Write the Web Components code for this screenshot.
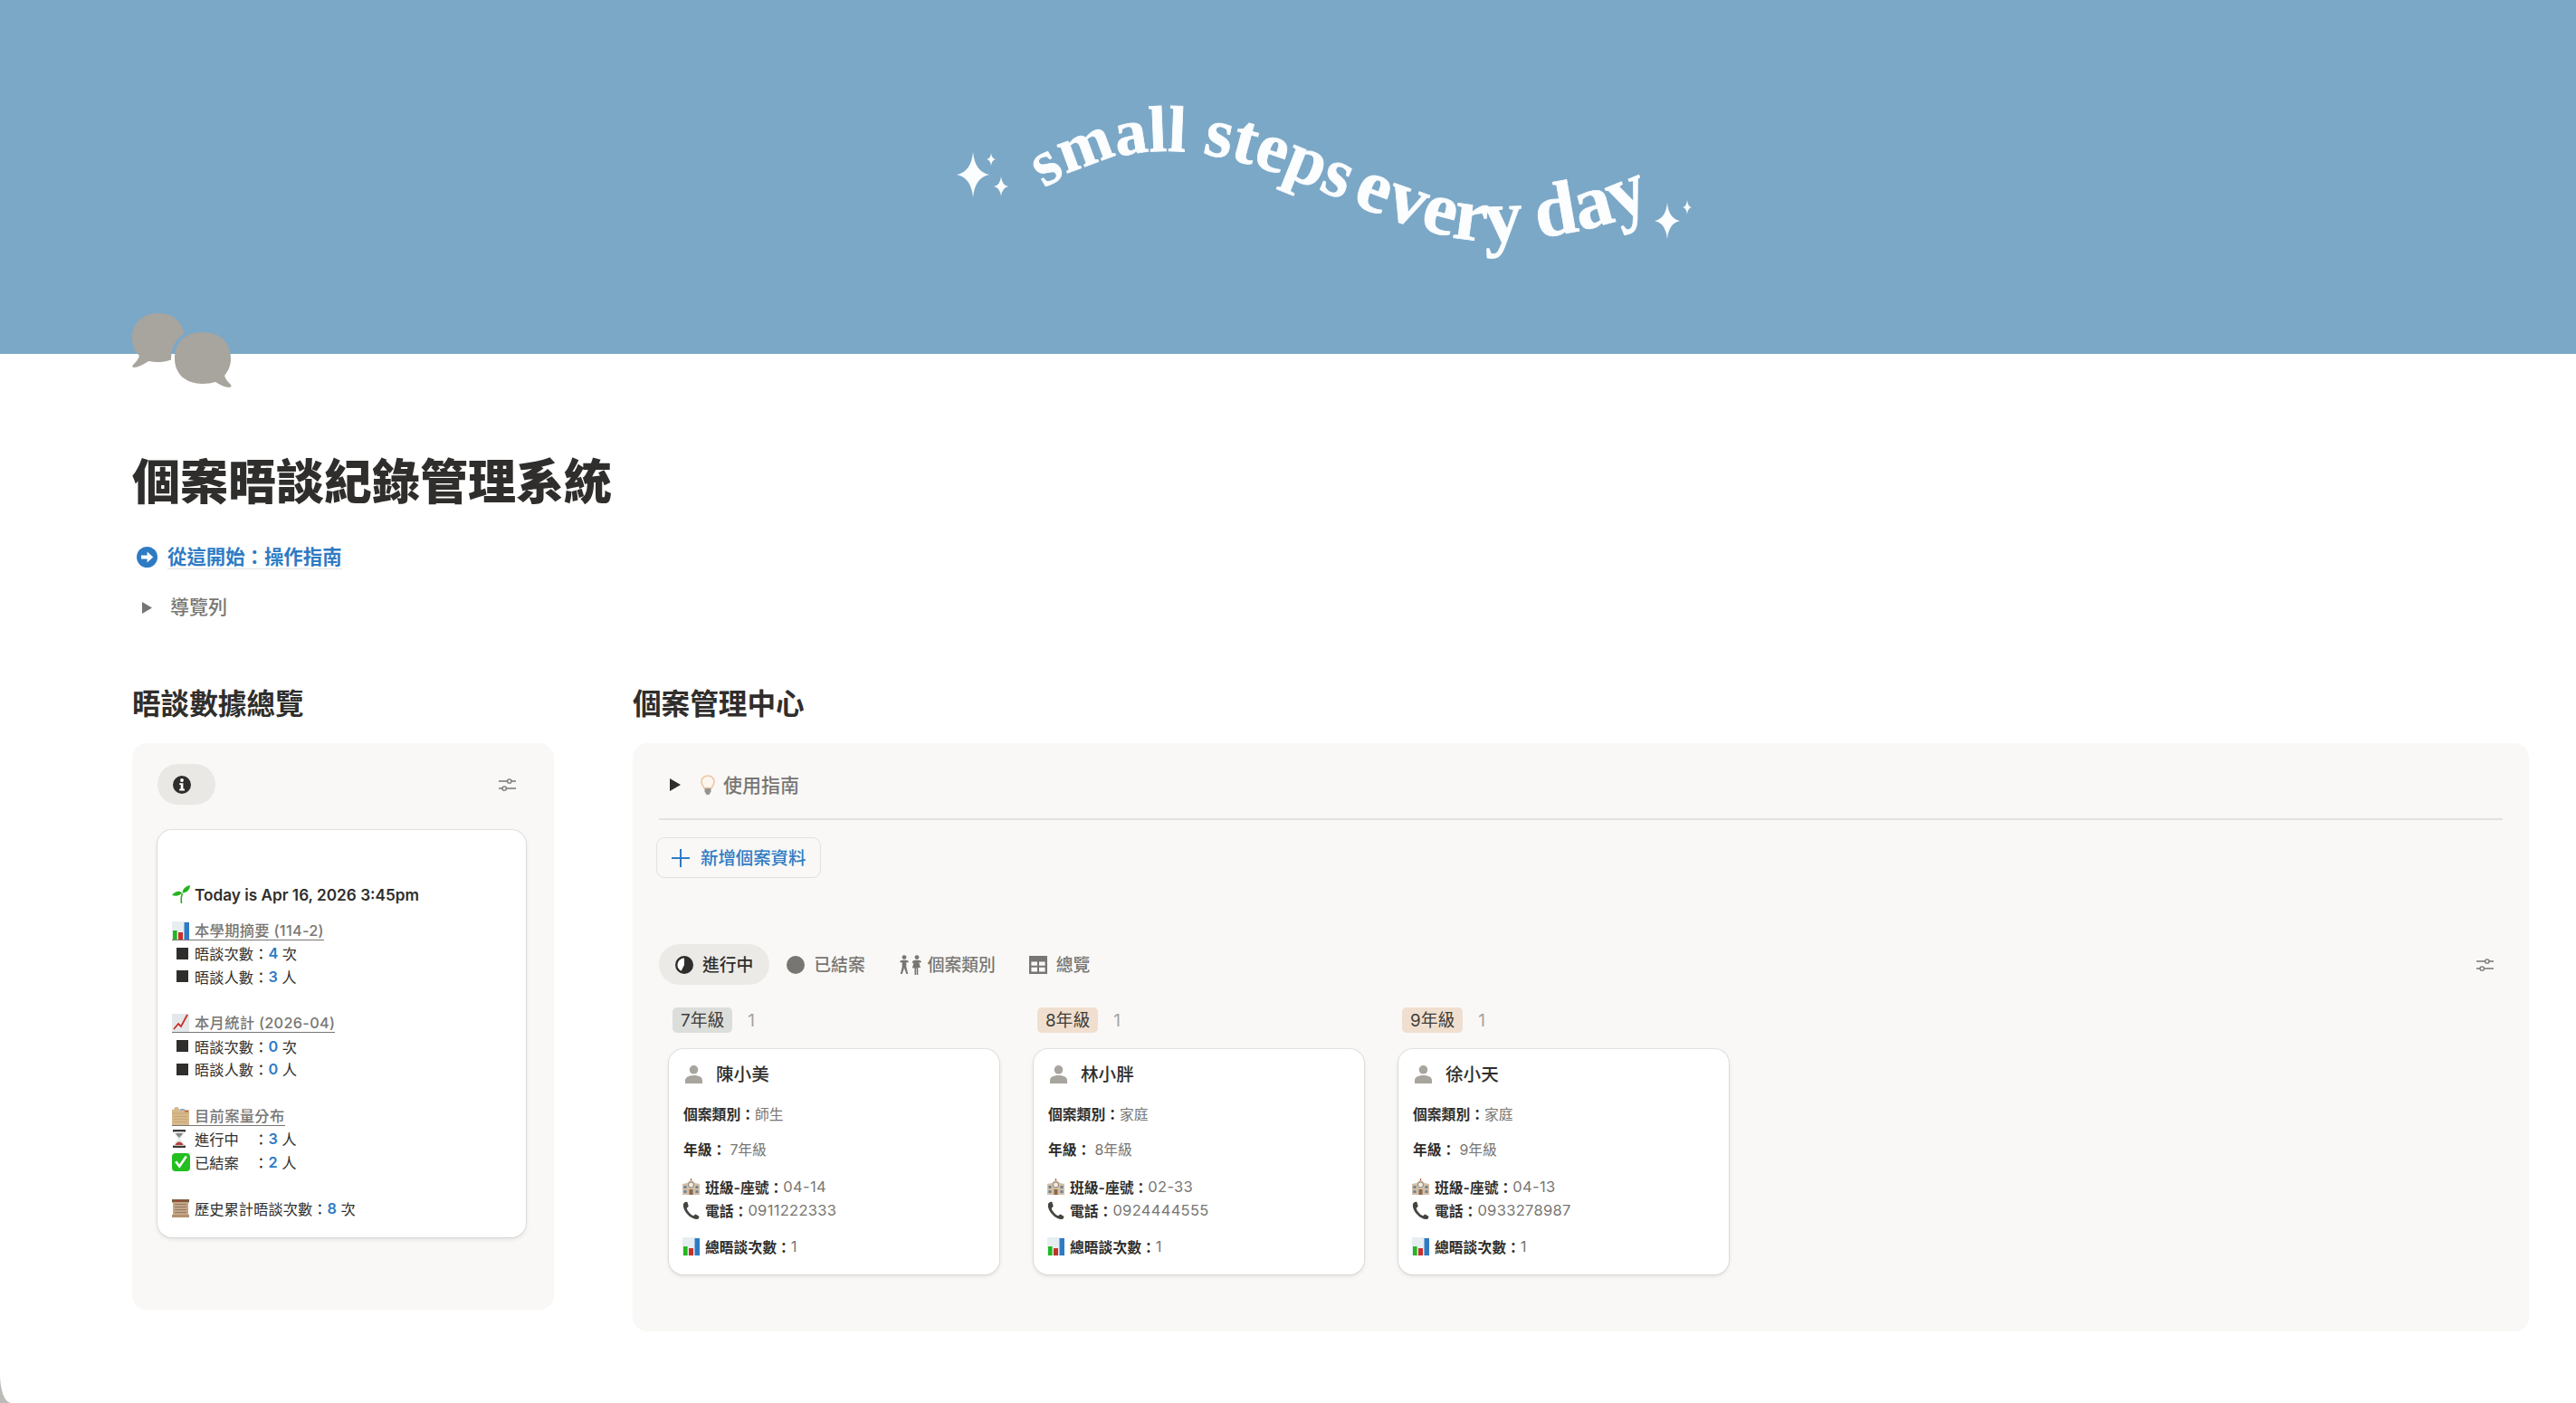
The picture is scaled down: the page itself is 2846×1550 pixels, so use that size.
<!DOCTYPE html>
<html lang="zh-Hant">
<head>
<meta charset="utf-8">
<title>個案晤談紀錄管理系統</title>
<style>
html,body{margin:0;padding:0;background:#bdbbb7;}
body{font-family:Inter,"Noto Sans CJK TC",sans-serif;color:#2f2e2c;overflow:hidden;}
</style>
</head>
<body>
<x-app>
  <x-cover></x-cover>
  <x-page-head title-text="個案晤談紀錄管理系統" link-text="從這開始：操作指南" toggle-text="導覽列"></x-page-head>
  <x-columns>
    <x-section slot="left" heading="晤談數據總覽">
      <x-stats-panel></x-stats-panel>
    </x-section>
    <x-section slot="right" heading="個案管理中心">
      <x-manage-panel>
        <x-tab active icon="pie">進行中</x-tab>
        <x-tab icon="dot">已結案</x-tab>
        <x-tab icon="people">個案類別</x-tab>
        <x-tab icon="table">總覽</x-tab>
        <x-board-col slot="board" label="7年級" tone="#dcdedb">
          <x-case-card name="陳小美" kind="師生" grade="7年級" seat="04-14" phone="0911222333" total="1"></x-case-card>
        </x-board-col>
        <x-board-col slot="board" label="8年級" tone="#f0dfcf">
          <x-case-card name="林小胖" kind="家庭" grade="8年級" seat="02-33" phone="0924444555" total="1"></x-case-card>
        </x-board-col>
        <x-board-col slot="board" label="9年級" tone="#f0dfcf">
          <x-case-card name="徐小天" kind="家庭" grade="9年級" seat="04-13" phone="0933278987" total="1"></x-case-card>
        </x-board-col>
      </x-manage-panel>
    </x-section>
  </x-columns>
</x-app>
<script>
const ICONS = {
  arrow:[23,23,'<circle cx="11.5" cy="11.5" r="11.5" fill="#2e7bc4"/><path d="M5 9.4h6.6V5.6l6.6 5.9-6.6 5.9v-3.8H5z" fill="#fff"/>'],
  tri:[12,14,'<path d="M0 0l12 7-12 7z" fill="currentColor"/>'],
  info:[20,20,'<circle cx="10" cy="10" r="10" fill="#2f2e2c"/><circle cx="10" cy="5" r="1.9" fill="#fff"/><path d="M7.2 8.2h4.2v6.4h1.6v1.8H7.2v-1.8h1.5v-4.6H7.2z" fill="#fff"/>'],
  sliders:[19,16,'<g fill="none" stroke="#787672" stroke-width="1.3"><path d="M0 4h9.5M14 4h5M0 12h4M8.5 12H19"/><circle cx="11.8" cy="4" r="2.2"/><circle cx="6.2" cy="12" r="2.2"/></g>'],
  plus:[20,20,'<path d="M10 0v20M0 10h20" stroke="#2e7bc4" stroke-width="2" fill="none"/>'],
  pie:[20,20,'<circle cx="10" cy="10" r="8.8" fill="#fff" stroke="#2f2e2c" stroke-width="2.400"/><path d="M10 10V1a9 9 0 0 1 0 18 9 9 0 0 1-4-1z" fill="#2f2e2c"/>'],
  dot:[20,20,'<circle cx="10" cy="10" r="10" fill="#787672"/>'],
  people:[26,22,'<g fill="#787672"><circle cx="6" cy="2.6" r="2.4"/><path d="M1 7.2C2 6 3.6 5.8 6 5.8s4 .2 5 1.4l-1.1 1.4-1.6-.7v5l1.9 8h-1.9L6 14.6 3.7 21H1.8l1.9-8V8L2.1 8.6z"/><circle cx="20" cy="2.6" r="2.4"/><path d="M15 7.2c1-1.2 2.6-1.4 5-1.4s4 .2 5 1.4l-1.1 1.5-1.6-.7 1.6 6h-2.6V22h-1.6v-7.4h-.6V22h-1.6v-7.4h-2.6l1.6-6-1.6.7z"/></g>'],
  table:[20,20,'<path d="M0 0h20v20H0zM2.4 6.6v4.2h6.6V6.6zm8.6 0v4.2h6.6V6.6zM2.4 12.8v4.6h6.6v-4.6zm8.6 0v4.6h6.6v-4.6z" fill="#787672" fill-rule="evenodd"/>'],
  person:[19,20,'<circle cx="9.5" cy="4.8" r="4.8" fill="#a8a49e"/><path d="M0 20v-3.4c0-3.4 3.6-5.6 9.5-5.6s9.5 2.2 9.5 5.6V20z" fill="#a8a49e"/>'],
  sprout:[20,20,'<path d="M10.5 20c-.6-4.5-.4-8 1-11" stroke="#2fa82b" stroke-width="1.6" fill="none"/><path d="M11 8.5C9 5.8 4 6 0 11c3.8 1.3 8.2 1 11-2.5z" fill="#25b321"/><path d="M11.5 8.5C11.8 4 15 1 20 0c-.2 4.6-3 8.2-8.5 8.5z" fill="#25b321"/>'],
  chart:[19,20,'<path d="M0 0h19v20H0z" fill="#e7eef2"/><path d="M1 10h4.600v10H1z" fill="#22b81f"/><path d="M7 12h5v8H7z" fill="#c9302a"/><path d="M13.500 1H19v19h-5.500z" fill="#2e7bc4"/>'],
  trend:[19,20,'<path d="M0 0h19v20H0z" fill="#e4e8ea"/><path d="M2 17l5-6 3 3 7-13" stroke="#c9302a" stroke-width="1.8" fill="none"/>'],
  box:[19,20,'<path d="M2 3c0-1.500 1-3 3-3s3 1 3 3h11v17H0V3z" fill="#d6b88d"/><path d="M0 7h19" stroke="#c9a874"/><path d="M9 2h5v1.500H9z" fill="#7da8d0"/><path d="M14 4h4v1.500h-4z" fill="#d2554c"/><g fill="#c9a874"><path d="M2 10h15v1H2zM2 13h15v1H2zM2 16h15v1H2z"/></g>'],
  hourglass:[16,20,'<path d="M1 0h14v2.600H1zM1 17.400h14V20H1z" fill="#3b3936"/><path d="M2.600 2.600h10.800c0 3.600-3 5.400-4.200 7.400 1.200 2 4.200 3.800 4.200 7.400H2.600C2.600 13.800 5.600 12 6.800 10 5.600 8 2.600 6.200 2.600 2.600z" fill="#e8ecee"/><path d="M4 4h8c-.6 1.800-2.600 3.400-4 5-1.400-1.600-3.400-3.200-4-5z" fill="#8a8681"/><path d="M3.400 17c.6-1.800 2.800-3.200 4.600-3.400 1.800.2 4 1.600 4.600 3.400z" fill="#b5403a"/>'],
  check:[20,20,'<rect width="20" height="20" rx="4" fill="#22bf1f"/><path d="M4.200 9.200l4.100 5.400 7.500-11" stroke="#fff" stroke-width="2.600" fill="none"/>'],
  ledger:[19,20,'<path d="M0 0h19v3.500H0z" fill="#7a5c3e"/><path d="M1 3h17v14H1z" fill="#c7a684"/><g fill="#8c7a68"><path d="M3 5h13v1H3zM3 8h13v1H3zM3 11h13v1H3zM3 14h13v1H3z"/></g><path d="M5 1.200h6v1H5z" fill="#c9302a"/><path d="M0 17h19v3H0z" fill="#b49271"/>'],
  school:[19,18,'<path d="M0 6l5-1 4.500-4 4.500 4 5 1v12H0z" fill="#d3bfa6"/><path d="M9 0h1v2H9z" fill="#b5403a"/><circle cx="9.500" cy="7" r="3" fill="#f0ede8" stroke="#7a6a58" stroke-width=".8"/><g fill="#6f8496"><path d="M1.500 8h3v3h-3zM1.500 13h3v3h-3zM14.500 8h3v3h-3zM14.500 13h3v3h-3z"/></g><path d="M7.500 12h4v6h-4z" fill="#8a6a4c"/>'],
  phone:[19,20,'<path d="M1 3.200C1.500 1.500 3.500.4 5.400 1l1.300 4.600c-.3 1-1.500 1.600-2 2.300.6 2 2 4 3.500 5.600 1.200 1.300 2.600 2.300 4 2.800.8-.5 1.500-1.600 2.400-1.800l3.700 2.300c.4 1.700-.6 3.200-2.300 3.200-3.700 0-7.500-2.200-10.300-5.300C2.700 11.500.2 7 1 3.200z" fill="#46443f"/>'],
  bulb:[16,22,'<path d="M8 1c3.900 0 7 2.900 7 6.700 0 3-2 4.300-2.800 6.800H3.800C3 12 1 10.700 1 7.700 1 3.900 4.100 1 8 1z" fill="#fdf6ee" stroke="#ecc8a6" stroke-width="1.600"/><path d="M4.500 15h7v3.500L9.500 22h-3l-2-3.500z" fill="#96948f"/>']
};
function svg(name,w,h){
  const [vw,vh,body]=ICONS[name];
  return `<svg xmlns="http://www.w3.org/2000/svg" width="${w||vw}" height="${h||vh}" viewBox="0 0 ${vw} ${vh}" style="display:block;flex:none" aria-hidden="true">${body}</svg>`;
}
customElements.define('x-app',class extends HTMLElement{
  constructor(){super();const r=this.attachShadow({mode:'open'});
  r.innerHTML=`<style>:host{display:block;height:1550px;background:#fff;border-bottom-left-radius:12px 32px;overflow:hidden}</style><slot></slot>`;}
});
customElements.define('x-cover',class extends HTMLElement{
  constructor(){super();const r=this.attachShadow({mode:'open'});
  const star=(x,y,rx,ry)=>{const k=.12;return `<path d="M${x} ${y-ry}Q${x+rx*k} ${y-ry*k} ${x+rx} ${y}Q${x+rx*k} ${y+ry*k} ${x} ${y+ry}Q${x-rx*k} ${y+ry*k} ${x-rx} ${y}Q${x-rx*k} ${y-ry*k} ${x} ${y-ry}Z" fill="#fbfdfe"/>`;};
  r.innerHTML=`<style>:host{display:block;height:391px;background:#7ca8c7}svg{display:block}
  text{font-family:"Liberation Serif",serif;font-weight:700;fill:#fbfdfe;stroke:#fbfdfe;stroke-width:.8px}</style>
  <svg width="2846" height="391" viewBox="0 0 2846 391">
   <defs><path id="w" d="M1154 208C1205 174 1265 160 1330 170C1400 182 1450 208 1510 232C1575 256 1625 274 1690 264C1735 258 1780 250 1830 226"/></defs>
   <text><textPath href="#w"><tspan font-size="72">small </tspan><tspan font-size="78">steps</tspan><tspan font-size="40"> </tspan><tspan font-size="84">every</tspan><tspan font-size="70"> </tspan><tspan font-size="84">day</tspan></textPath></text>
   ${star(1075,193,18,25)}${star(1095,176,5,7)}${star(1106,206,8,11)}${star(1842,244,14,20)}${star(1864,229,5,8)}
  </svg>`;}
});
customElements.define('x-page-head',class extends HTMLElement{
  constructor(){super();const r=this.attachShadow({mode:'open'});const g=n=>this.getAttribute(n);
  r.innerHTML=`<style>
  :host{display:block;padding:0 52px 0 146px}
  .icon{display:block;margin-top:-45px;height:82px}
  h1{margin:70px 0 0;font-size:53px;line-height:70px;font-weight:900;color:#2f2e2c;white-space:nowrap}
  .link{display:flex;align-items:center;gap:11px;margin:30px 0 0 5px;height:34px}
  .link span{font-size:21.4px;font-weight:600;color:#2e7bc4;line-height:26px;border-bottom:1px solid #e4e3e0;}
  .tog{display:flex;align-items:center;gap:20px;margin:22px 0 0 11px;height:34px;color:#787672}
  .tog span{font-size:21px;font-weight:500;line-height:34px}
  </style>
  <svg class="icon" width="110" height="82" viewBox="0 0 110 82">
    <defs><mask id="m" maskUnits="userSpaceOnUse" x="-5" y="-5" width="120" height="95"><rect x="-5" y="-5" width="120" height="95" fill="#fff"/><path d="M78 21C97 21 109 32 109 50S97 78 78 78 47 67 47 50 59 21 78 21Z" fill="#000" stroke="#000" stroke-width="8"/></mask></defs>
    <path mask="url(#m)" d="M29 0C47 0 58 12 58 28C58 45 46 54 29 54C25 54 21 53.5 18 53C12 57 6 60 2 60C0 60 0 58 1 57C4 54 7 51 8 47C3 42 0 36 0 27C0 11 12 0 29 0Z" fill="#a8a49e"/>
    <path d="M78 21C97 21 109 32 109 50C109 58 106 64 102 69C103 73 106 76 109 79C110 81 109 82 107 82C103 82 97 79 92 76C88 77 83 78 78 78C59 78 47 67 47 50C47 32 59 21 78 21Z" fill="#a8a49e"/>
  </svg>
  <h1>${g('title-text')}</h1>
  <div class="link">${svg('arrow')}<span>${g('link-text')}</span></div>
  <div class="tog">${svg('tri',11,13)}<span>${g('toggle-text')}</span></div>`;}
});
customElements.define('x-columns',class extends HTMLElement{
  constructor(){super();const r=this.attachShadow({mode:'open'});
  r.innerHTML=`<style>:host{display:grid;grid-template-columns:466px 2095px;column-gap:87px;padding:0 52px 0 146px;margin-top:70px;align-items:start}</style><slot name="left"></slot><slot name="right"></slot>`;}
});
customElements.define('x-section',class extends HTMLElement{
  constructor(){super();const r=this.attachShadow({mode:'open'});
  r.innerHTML=`<style>:host{display:block}h2{margin:0 0 23px;font-size:31.6px;line-height:40px;font-weight:700;color:#2f2e2c}</style><h2>${this.getAttribute('heading')}</h2><slot></slot>`;}
});
const panelCss=`background:#f9f8f6;border-radius:16px;`;
customElements.define('x-stat-line',class extends HTMLElement{
  constructor(){super();const r=this.attachShadow({mode:'open'});
  r.innerHTML=`<style>:host{display:flex;align-items:center;height:25.6px;box-sizing:border-box;padding-bottom:2px;font-size:16.3px;color:#2f2e2c;white-space:pre}
  .i{width:25px;flex:none;display:flex;align-items:center}</style><span class="i"><slot name="i"></slot></span><slot></slot>`;}
});
customElements.define('x-stats-panel',class extends HTMLElement{
  constructor(){super();const r=this.attachShadow({mode:'open'});
  const n=v=>`<b style="color:#2e7bc4;font-weight:600;font-family:Inter,sans-serif">${v}</b>`;
  const sq=`<span slot="i" style="display:block;width:13px;height:13px;background:#2f2e2c;margin-left:5px" role="img" aria-label="■"></span>`;
  const ic=(k)=>`<span slot="i" style="display:block">${svg(k)}</span>`;
  const head=(k,t)=>`<div class="hd"><span class="u">${svg(k)}<span>${t}</span></span></div>`;
  const line=(i,t,v,u)=>`<x-stat-line>${i}${t}：${n(v)} ${u}</x-stat-line>`;
  r.innerHTML=`<style>
  :host{display:block;${panelCss}height:626px;padding:23px 31px 0 28px;box-sizing:border-box}
  .top{display:flex;justify-content:space-between;align-items:center;height:45px}
  .pill{width:64px;height:45px;border-radius:23px;background:#e9e8e5;display:flex;align-items:center;padding-left:17px;box-sizing:border-box}
  .s{margin-right:11px}
  .card{margin-top:28px;height:450px;width:407px;box-sizing:border-box;background:#fff;border-radius:16px;box-shadow:0 0 0 1px rgba(15,15,15,.08),0 2px 5px rgba(15,15,15,.1);padding:58px 16px 0}
  .today{display:flex;align-items:center;height:26px;gap:5px;font-size:17.2px;font-weight:600;color:#2f2e2c}
  .hd{height:25.6px;display:flex;align-items:center;font-size:16.3px;font-weight:500;color:#787672;letter-spacing:.3px}
  .u{display:inline-flex;align-items:flex-end;gap:6px;line-height:19px;height:19px;border-bottom:1px solid #787672;white-space:pre}
  .gap{height:25.6px}
  </style>
  <div class="top"><div class="pill">${svg('info')}</div><div class="s">${svg('sliders')}</div></div>
  <div class="card">
    <div class="today">${svg('sprout')}<span>Today is Apr 16, 2026 3:45pm</span></div>
    <div style="height:15px"></div>
    ${head('chart','本學期摘要 (114-2)')}
    ${line(sq,'晤談次數',4,'次')}
    ${line(sq,'晤談人數',3,'人')}
    <div class="gap"></div>
    ${head('trend','本月統計 (2026-04)')}
    ${line(sq,'晤談次數',0,'次')}
    ${line(sq,'晤談人數',0,'人')}
    <div class="gap"></div>
    ${head('box','目前案量分布')}
    ${line(ic('hourglass'),'進行中　',3,'人')}
    ${line(ic('check'),'已結案　',2,'人')}
    <div class="gap"></div>
    ${line(ic('ledger'),'歷史累計晤談次數',8,'次')}
  </div>`;}
});
customElements.define('x-tab',class extends HTMLElement{
  constructor(){super();const r=this.attachShadow({mode:'open'});
  const a=this.hasAttribute('active');const k=this.getAttribute('icon');
  r.innerHTML=`<style>:host{display:flex;align-items:center;gap:10px;height:45px;padding:0 18px;border-radius:23px;font-size:18.8px;font-weight:500;white-space:nowrap;
  color:${a?'#2f2e2c':'#787672'};background:${a?'#ebeae7':'transparent'}}
  .p{margin-right:-4px}.l{padding-bottom:2px}</style><span class="${k==='people'?'p':''}">${svg(k)}</span><span class="l"><slot></slot></span>`;}
});
customElements.define('x-manage-panel',class extends HTMLElement{
  constructor(){super();const r=this.attachShadow({mode:'open'});
  r.innerHTML=`<style>
  :host{display:block;${panelCss}height:650px;box-sizing:border-box;padding:29px 29px 0}
  .tog{display:flex;align-items:center;height:34px;padding-left:12px;font-size:21px;font-weight:500;color:#787672}
  .tog .t{color:#2f2e2c;margin-right:22px}
  .tog .b{margin-right:9px}
  .tog .x{padding-bottom:3px}
  hr{border:0;height:2px;background:#e3e2df;margin:20px 0 19px}
  .btn{display:inline-flex;align-items:center;gap:13px;height:45px;box-sizing:border-box;margin-left:-3px;padding:0 16px;border:1px solid #e2e1de;border-radius:9px;font-size:19.4px;font-weight:500;color:#2e7bc4;vertical-align:top}
  .btn .x{padding-bottom:2px;margin-left:-1px}
  .tabs{display:flex;align-items:center;gap:1px;margin-top:73px;height:45px}
  .sl{margin-left:auto;margin-right:10px}
  .board{display:grid;grid-template-columns:repeat(3,365px);column-gap:38px;margin:25px 0 0 11px}
  </style>
  <div class="tog"><span class="t">${svg('tri')}</span><span class="b">${svg('bulb')}</span><span class="x">使用指南</span></div>
  <hr>
  <div style="height:45px"><span class="btn">${svg('plus')}<span class="x">新增個案資料</span></span></div>
  <div class="tabs"><slot></slot><span class="sl">${svg('sliders')}</span></div>
  <div class="board"><slot name="board"></slot></div>`;}
});
customElements.define('x-board-col',class extends HTMLElement{
  constructor(){super();const r=this.attachShadow({mode:'open'});
  r.innerHTML=`<style>:host{display:block}
  .h{display:flex;align-items:center;gap:17px;height:28px;padding-left:4px;margin-bottom:18px}
  .tag{height:28px;line-height:29px;padding:0 9px;border-radius:5px;font-size:18.8px;font-weight:400;color:#3f3d39;background:${this.getAttribute('tone')}}
  .n{font-size:19px;color:#a5a39f}</style>
  <div class="h"><span class="tag">${this.getAttribute('label')}</span><span class="n">1</span></div><slot></slot>`;}
});
customElements.define('x-case-card',class extends HTMLElement{
  constructor(){super();const r=this.attachShadow({mode:'open'});const g=n=>this.getAttribute(n);
  r.innerHTML=`<style>
  :host{display:block;height:249px;box-sizing:border-box;background:#fff;border-radius:16px;box-shadow:0 0 0 1px rgba(15,15,15,.08),0 2px 5px rgba(15,15,15,.1);padding:13px 15px 0 15px}
  .name{display:flex;align-items:center;gap:15px;height:30px;padding-left:3px;font-size:19.6px;font-weight:500;color:#2f2e2c}
  .name span{padding-bottom:3px}
  .r{display:flex;align-items:center;height:26px;font-size:15.8px;white-space:pre}
  .t{padding-bottom:2px}
  b{font-weight:600;color:#2f2e2c}
  i{font-style:normal;color:#787672;font-size:16.5px;letter-spacing:.3px}
  .c{font-size:15.8px;letter-spacing:0}
  .e{width:25px;flex:none}
  </style>
  <div class="name">${svg('person')}<span>${g('name')}</span></div>
  <div class="r" style="margin-top:16px"><span class="t" style="margin-left:1px"><b>個案類別：</b><i class="c">${g('kind')}</i></span></div>
  <div class="r" style="margin-top:13px"><span class="t" style="margin-left:1px"><b>年級： </b><i class="c">${g('grade')}</i></span></div>
  <div class="r" style="margin-top:15px"><span class="e">${svg('school')}</span><b>班級-座號：</b><i>${g('seat')}</i></div>
  <div class="r"><span class="e">${svg('phone')}</span><b>電話：</b><i>${g('phone')}</i></div>
  <div class="r" style="margin-top:14px"><span class="e">${svg('chart')}</span><b>總晤談次數：</b><i>${g('total')}</i></div>`;}
});
</script>
</body>
</html>
